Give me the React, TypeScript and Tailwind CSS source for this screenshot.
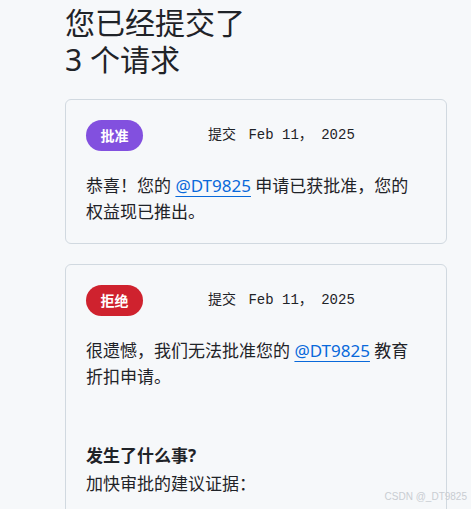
import React from 'react';

const sans = { fontFamily: '"Noto Sans", "Noto Sans CJK SC", sans-serif' };

function Badge({ label, tone }: { label: string; tone: 'approved' | 'denied' }) {
  return (
    <span
      className={`inline-flex h-[31px] w-[57px] items-center justify-center rounded-full text-[14px] font-bold text-white ${
        tone === 'approved' ? 'bg-[#8250df]' : 'bg-[#cf222e]'
      }`}
    >
      {label}
    </span>
  );
}

function Meta({ tone, label }: { tone: 'approved' | 'denied'; label: string }) {
  return (
    <div className="flex items-center">
      <Badge label={label} tone={tone} />
      <span
        className="ml-[65px] text-[14px] text-[#1f2328]"
        style={{ fontFamily: '"Liberation Mono", "Noto Sans CJK SC", monospace' }}
      >
        提交 <span className="ml-[4px]">Feb 11， 2025</span>
      </span>
    </div>
  );
}

function Handle() {
  return (
    <a className="text-[#0969da] underline decoration-1 underline-offset-[4px]" href="#">
      @DT9825
    </a>
  );
}

export default function App() {
  return (
    <div className="relative h-[509px] overflow-hidden bg-[#f6f8fa] text-[#1f2328]" style={sans}>
      <div className="ml-[65px] w-[382px] pt-[4px]">
        <h1 className="text-[30px] font-normal leading-[37px]">
          您已经提交了
          <br />3 个请求
        </h1>

        <div className="mt-[21px] rounded-[6px] border border-[#d1d9e0] pl-[20px] pr-[30px] pt-[20px] pb-[18px]">
          <Meta tone="approved" label="批准" />
          <p className="mt-[22px] text-[17px] leading-[26px]">
            恭喜！您的 <Handle /> 申请已获批准，您的权益现已推出。
          </p>
        </div>

        <div className="mt-[20px] rounded-[6px] border border-[#d1d9e0] pl-[20px] pr-[30px] pt-[20px] pb-[40px]">
          <Meta tone="denied" label="拒绝" />
          <p className="mt-[22px] text-[17px] leading-[26px]">
            很遗憾，我们无法批准您的 <Handle /> 教育折扣申请。
          </p>
          <h3 className="mt-[52px] text-[17px] font-bold leading-[28px]">发生了什么事?</h3>
          <p className="text-[17px] leading-[28px]">加快审批的建议证据：</p>
        </div>
      </div>

      <span
        className="absolute right-[4px] bottom-[5px] text-[10px] text-[#c9cdd2]"
        style={{ fontFamily: '"Liberation Sans", sans-serif' }}
      >
        CSDN @_DT9825
      </span>
    </div>
  );
}
